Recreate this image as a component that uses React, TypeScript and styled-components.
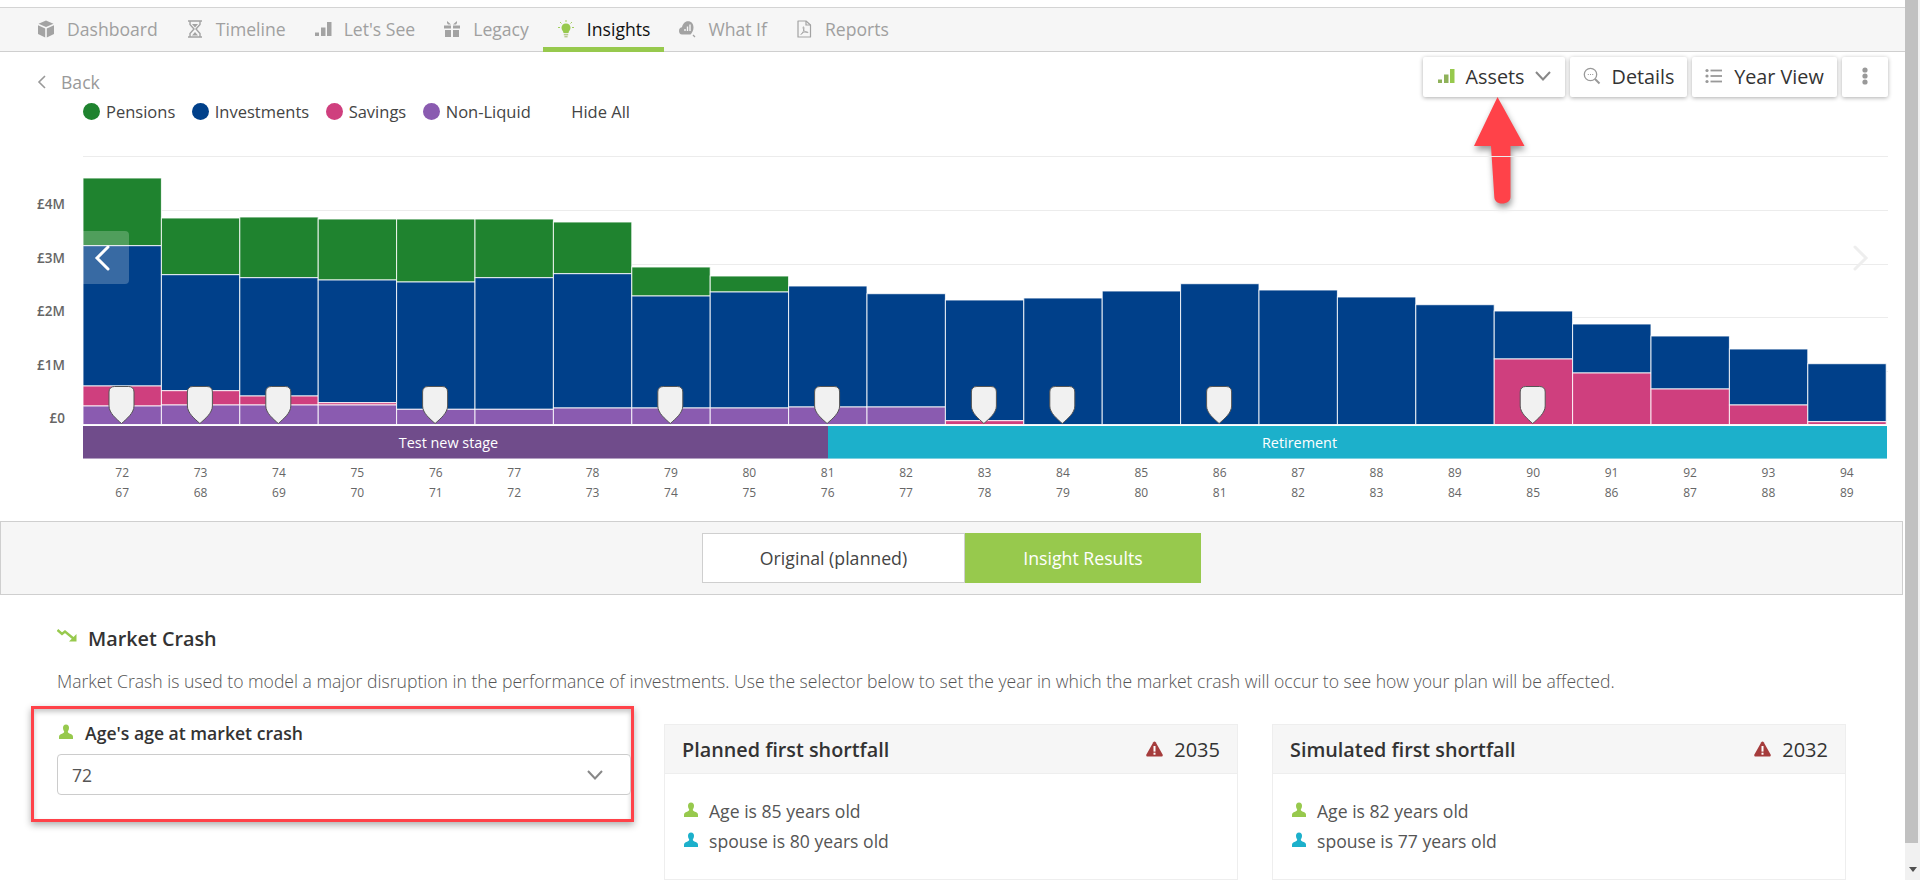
import React from "react";
import styled, { createGlobalStyle } from "styled-components";

const GREEN = "#97c94d";
const TEAL = "#1cb0cb";
const GREY = "#a3a3a3";
const BAR_W = 78.4;

const Global = createGlobalStyle`
  html, body { margin: 0; padding: 0; height: 880px; overflow: hidden; background: #fff; }
  body { font-family: "Open Sans", "Liberation Sans", sans-serif; color: #333; }
  * { box-sizing: border-box; }
`;

const Shell = styled.div`display: flex; width: 1920px; height: 880px; overflow: hidden;`;
const Main = styled.main`width: 1905px; flex: none; padding-top: 7px;`;
const Scrollbar = styled.div`width: 15px; flex: none; display: flex; flex-direction: column; background: #f1f1f1;`;
const ScrollThumb = styled.div`height: 843px; margin-right: 2px; background: #c1c1c1;`;
const ScrollArrow = styled.div`
  margin: 24px auto 0; width: 0; height: 0;
  border-left: 4px solid transparent; border-right: 4px solid transparent; border-top: 5px solid #505050;
`;

const Nav = styled.nav`
  height: 45px; display: flex; padding-left: 23px; background: #f6f6f6;
  border-top: 1px solid #d4d4d4; border-bottom: 1px solid #cfcfcf;
`;
const NavItem = styled.div<{ $active?: boolean }>`
  height: 44px; display: flex; align-items: center; padding: 0 14px 3px 14px; font-size: 17.6px;
  color: ${(p) => (p.$active ? "#111" : "#a0a0a0")};
  font-weight: ${(p) => (p.$active ? 500 : 400)};
  box-shadow: ${(p) => (p.$active ? `inset 0 -5px 0 ${GREEN}` : "none")};
`;
const NavIcon = styled.svg`width: 18px; height: 18px; margin-right: 12px; flex: none;`;

const Top = styled.div`display: flex; justify-content: space-between; height: 103px; padding: 5px 17px 0 37px;`;
const TopLeft = styled.div`display: flex; flex-direction: column;`;
const Back = styled.div`display: flex; align-items: center; gap: 15px; height: 24px; margin-top: 13px; font-size: 17.6px; color: #999;`;
const Legend = styled.div`display: flex; align-items: center; margin: 6px 0 0 46px; height: 24px; padding-bottom: 1px; font-size: 16.5px; color: #444;`;
const LegendItem = styled.div`display: flex; align-items: center; gap: 6px; margin-right: 16.5px;`;
const Dot = styled.span<{ $c: string }>`width: 17px; height: 17px; border-radius: 50%; background: ${(p) => p.$c};`;
const HideAll = styled.span`margin-left: 24px;`;

const Tools = styled.div`display: flex; gap: 5px;`;
const Tool = styled.div<{ $w: number }>`
  width: ${(p) => p.$w}px; height: 40px; padding-bottom: 2px; display: flex; align-items: center; justify-content: center;
  background: #fff; font-size: 19.8px; color: #333; border-radius: 2px;
  box-shadow: 0 1px 4px rgba(0, 0, 0, 0.32);
`;
const ToolIcon = styled.svg`width: 18px; height: 18px; margin-right: 11px; flex: none;`;
const ToolSpacer = styled.span`width: 11px;`;

const Arrow = styled.svg`
  position: absolute; left: 1464px; top: 95px; width: 70px; height: 115px; overflow: visible;
  filter: drop-shadow(1px 4px 3px rgba(0, 0, 0, 0.4));
`;

const ChartWrap = styled.section`position: relative;`;
const ChartRow = styled.div`display: flex; height: 270px;`;
const YAxis = styled.div`
  width: 83px; flex: none; display: flex; flex-direction: column; align-items: flex-end;
  padding: 40px 18px 0 0; gap: 35.5px; font-size: 13.5px; font-weight: 600; color: #666; line-height: 18px;
`;
const Plot = styled.svg`width: 1805px; height: 270px; display: block;`;
const Carousel = styled.div<{ $side: "l" | "r" }>`
  position: absolute; top: 76px; width: 46px; height: 53px; display: flex; align-items: center; justify-content: center;
  ${(p) => (p.$side === "l"
    ? "left: 83px; padding-right: 8px; background: rgba(255,255,255,.22); border-radius: 0 4px 4px 0;"
    : "left: 1838px;")}
`;

const Stages = styled.div`display: flex; margin: 1px 18px 0 83px; height: 33px;`;
const Stage = styled.div<{ $c: string; $edge: string; $w: number; $shift: number }>`
  width: ${(p) => p.$w}px; display: flex; align-items: center; justify-content: center;
  padding-right: ${(p) => p.$shift}px;
  background: ${(p) => p.$c}; border-bottom: 1px solid ${(p) => p.$edge}; color: #fff; font-size: 14.4px;
`;
const Ages = styled.div`display: grid; grid-template-columns: repeat(23, ${BAR_W}px); margin: 4px 0 0 83px;`;
const AgeCell = styled.div`text-align: center; font-size: 12px; line-height: 20px; color: #666;`;

const TogglePanel = styled.div`
  margin-top: 18px; height: 74px; display: flex; justify-content: center; align-items: center;
  width: 1903px; background: #f6f6f6; border: 1px solid #cfcfcf;
`;
const ToggleBtn = styled.div<{ $on?: boolean; $w: number }>`
  width: ${(p) => p.$w}px; height: 50px; display: flex; align-items: center; justify-content: center;
  font-size: 17.7px; background: ${(p) => (p.$on ? GREEN : "#fff")}; color: ${(p) => (p.$on ? "#fff" : "#444")};
  border: 1px solid ${(p) => (p.$on ? GREEN : "#cfcfcf")};
`;

const Section = styled.section`padding: 31px 0 0 57px;`;
const Heading = styled.h2`
  margin: 0; display: flex; align-items: center; height: 24px; font-size: 19.8px; font-weight: 600; color: #333;
`;
const HeadingIcon = styled.svg`width: 21px; height: 16px; margin: -5px 10px 0 0;`;
const Description = styled.p`margin: 19px 0 0; font-size: 17.6px; font-weight: 300; color: #555; line-height: 24px; white-space: nowrap;`;

const Lower = styled.div`display: flex; align-items: flex-start; margin-top: 13px;`;
const Highlight = styled.div`
  width: 603px; height: 116px; margin-left: -26px; padding: 12px 0 0 23px; flex: none;
  border: 3px solid #ff4249; box-shadow: 0 3px 7px rgba(0,0,0,.32), inset 0 3px 5px rgba(0,0,0,.22);
`;
const Label = styled.div`display: flex; align-items: center; height: 24px; font-size: 17.6px; font-weight: 600; color: #333;`;
const Person = styled.svg`width: 14px; height: 16px; margin: -3px 12px 0 2px; flex: none;`;
const Select = styled.div`
  width: 574px; height: 41px; margin-top: 9px; padding: 0 27px 0 14px; display: flex; align-items: center; justify-content: space-between;
  border: 1px solid #ccc; border-radius: 4px; font-size: 17.6px; color: #555; background: #fff;
`;
const Card = styled.div`width: 574px; height: 156px; flex: none; border: 1px solid #eee;`;
const CardHead = styled.div`
  height: 49px; padding: 0 17px 0 17px; display: flex; align-items: center; justify-content: space-between;
  background: #f6f6f6; border-bottom: 1px solid #eee; font-size: 19.8px; font-weight: 600; color: #333;
`;
const Year = styled.span`display: flex; align-items: center; gap: 11px; font-size: 20px; font-weight: 500;`;
const CardBody = styled.div`padding: 22px 18px 0;`;
const CardRow = styled.div`display: flex; align-items: center; height: 30px; font-size: 17.6px; color: #555;`;
const RowPerson = styled(Person)`margin: -3px 11px 0 1px;`;

const bars: number[][] = [
  [178, 245.7, 386, 406], [218, 274.7, 390.7, 405], [217, 277.7, 396, 405], [219, 280, 402.7, 405],
  [219, 282, 409.3, 409.3], [219, 277.7, 409.3, 409.3], [222, 273.7, 408, 408], [267, 296, 408, 408],
  [276, 292, 408, 408], [286, 286, 407, 407], [293.7, 293.7, 407, 407], [300, 300, 420.7, 424.5],
  [298, 298, 424.5, 424.5], [291, 291, 424.5, 424.5], [283.7, 283.7, 424.5, 424.5], [290, 290, 424.5, 424.5],
  [297, 297, 424.5, 424.5], [304.7, 304.7, 424.5, 424.5], [311, 311, 359, 424.5], [324, 324, 373, 424.5],
  [336, 336, 389, 424.5], [349, 349, 405, 424.5], [363.7, 363.7, 421.7, 424.5],
];
const markers = [0, 1, 2, 4, 7, 9, 11, 12, 14, 18];
const gridYs = [156, 210, 264, 317, 371];
const Y0 = 155;

function Bars() {
  const seg = (i: number, a: number, b: number, c: string) =>
    b - a > 0.1 ? (
      <rect key={c} x={i * BAR_W} y={a - Y0} width={BAR_W} height={b - a} fill={c} stroke="#fff" strokeOpacity={0.85} strokeWidth={1} />
    ) : null;
  return (
    <Plot viewBox="0 0 1805 270">
      {gridYs.map((y) => <line key={y} x1={0} x2={1805} y1={y - Y0 + 0.5} y2={y - Y0 + 0.5} stroke="#ececec" />)}
      {bars.map(([g, b, p, v], i) => (
        <g key={i}>
          {seg(i, g, b, "#1f832f")}
          {seg(i, b, p, "#00408a")}
          {seg(i, p, v, "#cf3f7e")}
          {seg(i, v, 424.5, "#8a5bb0")}
        </g>
      ))}
      {markers.map((i) => {
        const x = i * BAR_W + 38.5;
        return (
          <path key={i} transform={`translate(${x} ${386 - Y0})`}
            d="M-7 0.5H7C10.5 0.5 12.5 2.5 12.5 6V20C12.5 27 5 33 0 37.5 -5 33 -12.5 27 -12.5 20V6C-12.5 2.5 -10.5 0.5 -7 0.5Z"
            fill="#f1f1f1" stroke="#555" strokeWidth={1} />
        );
      })}
    </Plot>
  );
}

const Cube = () => (
  <NavIcon viewBox="0 0 18 18" fill={GREY}>
    <path d="M9 0.5 16.5 3.7 9 7 1.5 3.7Z" /><path d="M1 5.2 8.2 8.4V17.5L1 14Z" /><path d="M17 5.2 9.8 8.4V17.5L17 14Z" />
  </NavIcon>
);
const Hourglass = () => (
  <NavIcon viewBox="0 0 18 18" fill="none" stroke={GREY} strokeWidth={1.4}>
    <path d="M2 1H16M2 17H16M4 1V4.5L8 9 4 13.5V17M14 1V4.5L10 9 14 13.5V17" />
    <path d="M6 15.5 9 12 12 15.5Z M6 4H12L9 7.5Z" fill={GREY} stroke="none" />
  </NavIcon>
);
const BarsIcon = ({ c = GREY, c2 = GREY }: { c?: string; c2?: string }) => (
  <>
    <rect x="1" y="12.5" width="4" height="3.5" fill={c2} />
    <rect x="7" y="7.5" width="4.5" height="8.5" fill={c2} />
    <rect x="13" y="2" width="4.5" height="14" fill={c} />
  </>
);
const Gift = () => (
  <NavIcon viewBox="0 0 18 18" fill={GREY}>
    <path d="M1 5.5H8V8.5H1ZM10 5.5H17V8.5H10ZM2 10H8V17H2ZM10 10H16V17H10Z" />
    <path d="M4 1 8 4.6H5Q3.5 4 4 1ZM14 1 10 4.6H13Q14.5 4 14 1Z" />
  </NavIcon>
);
const Bulb = () => (
  <NavIcon viewBox="0 0 18 18" fill={GREEN}>
    <path d="M9 3.5C12 3.5 13.5 5.6 13.5 7.8 13.5 10 11.8 11 11.5 13H6.5C6.2 11 4.5 10 4.5 7.8 4.5 5.6 6 3.5 9 3.5Z" />
    <rect x="6.8" y="13.8" width="4.4" height="1.6" fill="#b8c98f" /><rect x="7.4" y="16" width="3.2" height="1.4" fill="#b8c98f" />
    <path d="M9 0V2M3 2 4.5 3.5M15 2 13.5 3.5M1 7.5H3M15 7.5H17" stroke={GREEN} strokeWidth={0.9} fill="none" />
  </NavIcon>
);
const WhatIf = () => (
  <NavIcon viewBox="0 0 18 18" fill={GREY}>
    <path d="M1 11C1 8.5 2.5 7.5 4 7.3 4.6 4 7 1.3 10 1.3 13.5 1.3 15.5 4 15.5 7.5 15.5 10.5 14 13 12.5 14.5H4C2 14.5 1 12.8 1 11Z" />
    <path d="M7 11V9M9.5 11V6.5M12 11V4.5" stroke="#f6f6f6" strokeWidth={1.4} fill="none" />
    <path d="M15 15 17 17" stroke={GREY} strokeWidth={1.2} />
  </NavIcon>
);
const Pdf = () => (
  <NavIcon viewBox="0 0 18 18" fill="none" stroke={GREY} strokeWidth={1.2}>
    <path d="M3 1H11L15.5 5V17H3Z" strokeLinejoin="round" /><path d="M11 1V5H15.5" />
    <path d="M6 14.5C8 13 9.5 9.5 8.8 7.3 8.3 6 7.7 7 8.5 9.5 9.2 11.5 11 12.8 12.8 12.6 13.3 12 12 11.5 9.8 12 8 12.5 6.5 13.3 6 14.5Z" strokeWidth={0.9} />
  </NavIcon>
);

const PersonShape = ({ c }: { c: string }) => (
  <path fill={c} d="M7 0C9 0 10 1.4 10 3.3 10 5 9.3 6.2 8.8 7 8.8 8 9.5 8.7 11 9.2 13 9.9 14 10.6 14 12.5V14.5H0V12.5C0 10.6 1 9.9 3 9.2 4.5 8.7 5.2 8 5.2 7 4.7 6.2 4 5 4 3.3 4 1.4 5 0 7 0Z" />
);
const Warn = () => (
  <svg width="17" height="16" viewBox="0 0 17 16">
    <path d="M8.5 0.5C9 0.5 9.4 0.8 9.7 1.3L16.6 13.6C17.1 14.6 16.5 15.6 15.4 15.6H1.6C0.5 15.6 -0.1 14.6 0.4 13.6L7.3 1.3C7.6 0.8 8 0.5 8.5 0.5Z" fill="#a53c3c" />
    <rect x="7.5" y="5" width="2" height="5.6" fill="#fff" /><rect x="7.5" y="11.7" width="2" height="2" fill="#fff" />
  </svg>
);
const Chevron = ({ c = "#888" }: { c?: string }) => (
  <svg width="16" height="10" viewBox="0 0 16 10" fill="none" stroke={c} strokeWidth={2}><path d="M1 1 8 8.5 15 1" /></svg>
);

const cards = [
  { title: "Planned first shortfall", year: "2035", a: "Age is 85 years old", b: "spouse is 80 years old" },
  { title: "Simulated first shortfall", year: "2032", a: "Age is 82 years old", b: "spouse is 77 years old" },
];
const CardsGap = styled.div`display: flex; gap: 34px; margin: 18px 0 0 30px;`;

export default function App() {
  return (
    <Shell>
      <Global />
      <Main>
        <Nav>
          <NavItem><Cube />Dashboard</NavItem>
          <NavItem><Hourglass />Timeline</NavItem>
          <NavItem><NavIcon viewBox="0 0 18 18"><BarsIcon /></NavIcon>Let's See</NavItem>
          <NavItem><Gift />Legacy</NavItem>
          <NavItem $active><Bulb />Insights</NavItem>
          <NavItem><WhatIf />What If</NavItem>
          <NavItem><Pdf />Reports</NavItem>
        </Nav>
        <Top>
          <TopLeft>
            <Back>
              <svg width="9" height="14" viewBox="0 0 9 14" fill="none" stroke="#999" strokeWidth={1.6}><path d="M8 1 2 7 8 13" /></svg>
              Back
            </Back>
            <Legend>
              <LegendItem><Dot $c="#1f832f" />Pensions</LegendItem>
              <LegendItem><Dot $c="#00408a" />Investments</LegendItem>
              <LegendItem><Dot $c="#cf3f7e" />Savings</LegendItem>
              <LegendItem><Dot $c="#8a5bb0" />Non-Liquid</LegendItem>
              <HideAll>Hide All</HideAll>
            </Legend>
          </TopLeft>
          <Tools>
            <Tool $w={142}>
              <ToolIcon viewBox="0 0 18 18"><BarsIcon c={GREEN} c2="#8fb25a" /></ToolIcon>
              Assets
              <ToolSpacer />
              <Chevron />
            </Tool>
            <Tool $w={117}>
              <ToolIcon viewBox="0 0 18 18" fill="none" stroke="#999" strokeWidth={1.3}>
                <circle cx="7.5" cy="7.5" r="6.2" /><path d="M12 12 16.5 16.5" strokeWidth={2} />
                <path d="M4.8 7.5H5.8M7 7.5H8M9.2 7.5H10.2" strokeWidth={1.2} />
              </ToolIcon>
              Details
            </Tool>
            <Tool $w={145}>
              <ToolIcon viewBox="0 0 18 18" fill="#999">
                <circle cx="2" cy="3.5" r="1.6" /><circle cx="2" cy="9" r="1.6" /><circle cx="2" cy="14.5" r="1.6" />
                <rect x="5.5" y="2.6" width="11.5" height="1.8" /><rect x="5.5" y="8.1" width="11.5" height="1.8" /><rect x="5.5" y="13.6" width="11.5" height="1.8" />
              </ToolIcon>
              Year View
            </Tool>
            <Tool $w={46}>
              <svg width="6" height="18" viewBox="0 0 6 18" fill="#999"><circle cx="3" cy="3" r="2.6" /><circle cx="3" cy="9" r="2.6" /><circle cx="3" cy="15" r="2.6" /></svg>
            </Tool>
          </Tools>
        </Top>
        <Arrow viewBox="0 0 70 115">
          <path fill="#ff4249" d="M33.5 2 60.5 51H46.5L46.5 102C46.5 106 43 108.5 38 108.5 33.5 108.5 30.5 106 30.3 102L27 51H10Z" />
        </Arrow>
        <ChartWrap>
          <ChartRow>
            <YAxis>
              <span>£4M</span><span>£3M</span><span>£2M</span><span>£1M</span><span>£0</span>
            </YAxis>
            <Bars />
          </ChartRow>
          <Carousel $side="l">
            <svg width="16" height="26" viewBox="0 0 16 26" fill="none" stroke="#fff" strokeWidth={3} strokeLinecap="round"><path d="M14 2 3 13 14 24" /></svg>
          </Carousel>
          <Carousel $side="r">
            <svg width="16" height="26" viewBox="0 0 16 26" fill="none" stroke="#eee" strokeWidth={3} strokeLinecap="round"><path d="M2 2 13 13 2 24" /></svg>
          </Carousel>
          <Stages>
            <Stage $c="#704c8b" $edge="#b3a0c2" $w={745} $shift={14}>Test new stage</Stage>
            <Stage $c={TEAL} $edge="#7bd0e0" $w={1059} $shift={116}>Retirement</Stage>
          </Stages>
          <Ages>
            {bars.map((_, i) => (
              <AgeCell key={i}>{72 + i}<br />{67 + i}</AgeCell>
            ))}
          </Ages>
        </ChartWrap>
        <TogglePanel>
          <ToggleBtn $w={263}>Original (planned)</ToggleBtn>
          <ToggleBtn $w={236} $on>Insight Results</ToggleBtn>
        </TogglePanel>
        <Section>
          <Heading>
            <HeadingIcon viewBox="0 0 21 16" fill="none" stroke={GREEN} strokeWidth={2.4}>
              <path d="M0.5 2 5 6 8 3.5 17 11" /><path d="M19.5 6V13.5H12Z" strokeWidth={0} fill={GREEN} />
            </HeadingIcon>
            Market Crash
          </Heading>
          <Description>
            Market Crash is used to model a major disruption in the performance of investments. Use the selector below to set the year in which the market crash will occur to see how your plan will be affected.
          </Description>
          <Lower>
            <Highlight>
              <Label>
                <Person viewBox="0 0 14 15"><PersonShape c={GREEN} /></Person>
                Age's age at market crash
              </Label>
              <Select>72<Chevron /></Select>
            </Highlight>
            <CardsGap>
              {cards.map((c) => (
                <Card key={c.title}>
                  <CardHead>{c.title}<Year><Warn />{c.year}</Year></CardHead>
                  <CardBody>
                    <CardRow><RowPerson viewBox="0 0 14 15"><PersonShape c={GREEN} /></RowPerson>{c.a}</CardRow>
                    <CardRow><RowPerson viewBox="0 0 14 15"><PersonShape c={TEAL} /></RowPerson>{c.b}</CardRow>
                  </CardBody>
                </Card>
              ))}
            </CardsGap>
          </Lower>
        </Section>
      </Main>
      <Scrollbar>
        <ScrollThumb />
        <ScrollArrow />
      </Scrollbar>
    </Shell>
  );
}
